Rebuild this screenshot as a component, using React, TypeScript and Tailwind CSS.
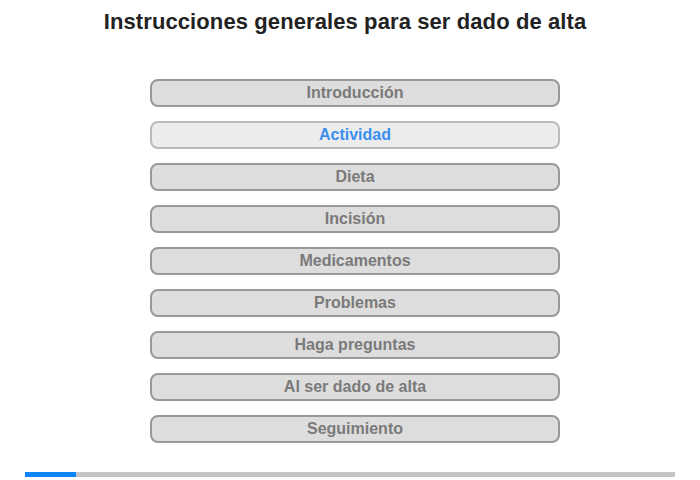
import React from 'react';

const items = [
  'Introducción',
  'Actividad',
  'Dieta',
  'Incisión',
  'Medicamentos',
  'Problemas',
  'Haga preguntas',
  'Al ser dado de alta',
  'Seguimiento',
];

const App: React.FC = () => {
  const active = 1;
  return (
    <div className="w-[700px] h-[480px] bg-white font-['Liberation_Sans',Arial,sans-serif] flex flex-col">
      <h1 className="text-center text-[22px] font-bold text-[#222] leading-[26px] pt-[9px] pr-[10px] tracking-[0.1px]">
        Instrucciones generales para ser dado de alta
      </h1>

      <div className="flex flex-col items-center gap-[14px] mt-[44px] pl-[10px]">
        {items.map((label, i) => (
          <div
            key={label}
            className={
              i === active
                ? 'w-[410px] h-[28px] rounded-[8px] border-2 border-[#bbbbbb] bg-[#ececec] flex items-center justify-center text-[16px] font-bold text-[#3a8ff0]'
                : 'w-[410px] h-[28px] rounded-[8px] border-2 border-[#999999] bg-[#dddddd] flex items-center justify-center text-[16px] font-bold text-[#7a7a7a]'
            }
          >
            {label}
          </div>
        ))}
      </div>

      {/* progress */}
      <div className="mx-[25px] mt-[29px] h-[5px] bg-[#c4c4c4] flex">
        <div className="w-[51px] h-full bg-[#0a84ff]" />
      </div>
    </div>
  );
};

export default App;
